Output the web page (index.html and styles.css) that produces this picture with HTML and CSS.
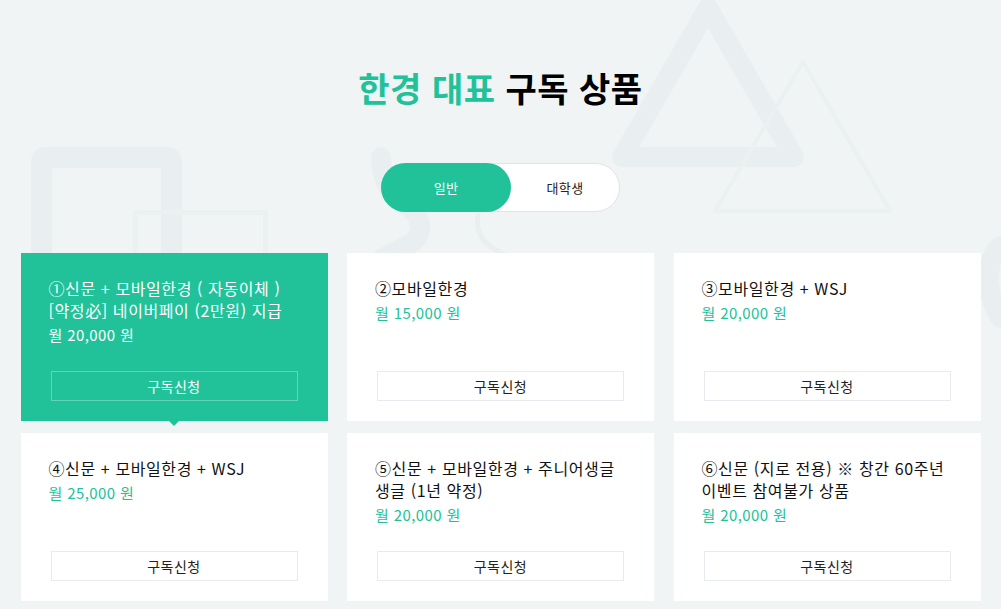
FILE: index.html
```html
<!DOCTYPE html>
<html lang="ko">
<head>
<meta charset="utf-8">
<title>한경 대표 구독 상품</title>
<link rel="stylesheet" href="styles.css">
</head>
<body>
<div class="page">
  <svg class="deco" width="1001" height="609" viewBox="0 0 1001 609" aria-hidden="true">
    <g fill="none" stroke="#e9eef0" stroke-linejoin="round" stroke-linecap="round">
      <polygon points="708,8 622,157 794,157" stroke-width="20"/>
      <polygon points="803,62 715,211 890,211" stroke-width="4" stroke="#ebf0f1"/>
      <rect x="41.5" y="157.5" width="130" height="220" rx="4" stroke-width="21"/>
      <rect x="135.5" y="212.5" width="130" height="120" stroke-width="5" stroke="#ebf0f1"/>
      <path d="M381,157 C381,205 420,200 420,228 C420,246 395,248 378,262" stroke-width="20"/>
      <path d="M478,215 C474,238 490,248 505,255" stroke-width="5"/>
      <path d="M1001,246 C985,255 985,300 1001,318" stroke-width="20"/>
    </g>
  </svg>

  <main class="content">
    <h1 class="title"><span class="accent">한경 대표</span> 구독 상품</h1>

    <div class="toggle">
      <button class="toggle-btn is-active" type="button">일반</button>
      <button class="toggle-btn" type="button">대학생</button>
    </div>

    <ul class="cards">
      <li class="card is-active">
        <p class="card-name">①신문 + 모바일한경 ( 자동이체 ) [약정必] 네이버페이 (2만원) 지급</p>
        <p class="card-price">월 20,000 원</p>
        <a class="card-btn" href="#">구독신청</a>
      </li>
      <li class="card">
        <p class="card-name">②모바일한경</p>
        <p class="card-price">월 15,000 원</p>
        <a class="card-btn" href="#">구독신청</a>
      </li>
      <li class="card">
        <p class="card-name">③모바일한경 + WSJ</p>
        <p class="card-price">월 20,000 원</p>
        <a class="card-btn" href="#">구독신청</a>
      </li>
      <li class="card">
        <p class="card-name">④신문 + 모바일한경 + WSJ</p>
        <p class="card-price">월 25,000 원</p>
        <a class="card-btn" href="#">구독신청</a>
      </li>
      <li class="card">
        <p class="card-name">⑤신문 + 모바일한경 + 주니어생글생글 (1년 약정)</p>
        <p class="card-price">월 20,000 원</p>
        <a class="card-btn" href="#">구독신청</a>
      </li>
      <li class="card">
        <p class="card-name">⑥신문 (지로 전용) ※ 창간 60주년 이벤트 참여불가 상품</p>
        <p class="card-price">월 20,000 원</p>
        <a class="card-btn" href="#">구독신청</a>
      </li>
    </ul>
  </main>
</div>
</body>
</html>
```

FILE: styles.css
```css
* {
  box-sizing: border-box;
}

html, body {
  margin: 0;
  padding: 0;
}

body {
  background: #f0f4f5;
  font-family: "Noto Sans CJK KR", "Noto Sans", sans-serif;
  color: #111;
}

.page {
  position: relative;
  width: 1001px;
  height: 609px;
  overflow: hidden;
}

.deco {
  position: absolute;
  left: 0;
  top: 0;
}

.content {
  position: relative;
  width: 960px;
  margin: 0 auto;
  padding-top: 67px;
}

.title {
  margin: 0;
  text-align: center;
  font-size: 34px;
  line-height: 42px;
  font-weight: 700;
  color: #000;
  letter-spacing: 0.5px;
}

.title .accent {
  color: #21c29a;
}

.toggle {
  display: flex;
  width: 239px;
  height: 49px;
  margin: 54px auto 0;
  background: #fff;
  border: 1px solid #e1e4e6;
  border-radius: 25px;
}

.toggle-btn {
  border: 0;
  background: transparent;
  font-family: inherit;
  font-size: 13px;
  letter-spacing: 0.3px;
  color: #222;
  padding: 0;
  cursor: pointer;
  flex: 1;
}

.toggle-btn.is-active {
  flex: 0 0 130px;
  margin: -1px 0 -1px -1px;
  background: #21c29a;
  color: #fff;
  border-radius: 25px;
}

.cards {
  list-style: none;
  margin: 41px 0 0;
  padding: 0;
  display: grid;
  grid-template-columns: repeat(3, 307px);
  column-gap: 19.5px;
  row-gap: 12px;
}

.card {
  position: relative;
  height: 168px;
  background: #fff;
  display: flex;
  flex-direction: column;
  padding: 24px 30px 20px;
}

.card-name {
  margin: 0 0 0 -2px;
  font-size: 16px;
  line-height: 22px;
  letter-spacing: 0.6px;
  color: #111;
}

.card-price {
  margin: 3px 0 0 -2px;
  font-size: 15px;
  line-height: 22px;
  letter-spacing: 0.4px;
  color: #21c29a;
}

.card-btn {
  margin-top: auto;
  display: block;
  height: 30px;
  line-height: 28px;
  border: 1px solid #e8ebed;
  text-align: center;
  font-size: 14px;
  letter-spacing: 0.5px;
  color: #222;
  text-decoration: none;
}

.card.is-active {
  background: #21c29a;
}

.card.is-active .card-name,
.card.is-active .card-price,
.card.is-active .card-btn {
  color: #fff;
}

.card.is-active .card-btn {
  border-color: rgba(255, 255, 255, 0.3);
}

.card.is-active::after {
  content: "";
  position: absolute;
  left: 50%;
  bottom: -5px;
  margin-left: -5px;
  border-left: 5px solid transparent;
  border-right: 5px solid transparent;
  border-top: 5px solid #21c29a;
}
```
